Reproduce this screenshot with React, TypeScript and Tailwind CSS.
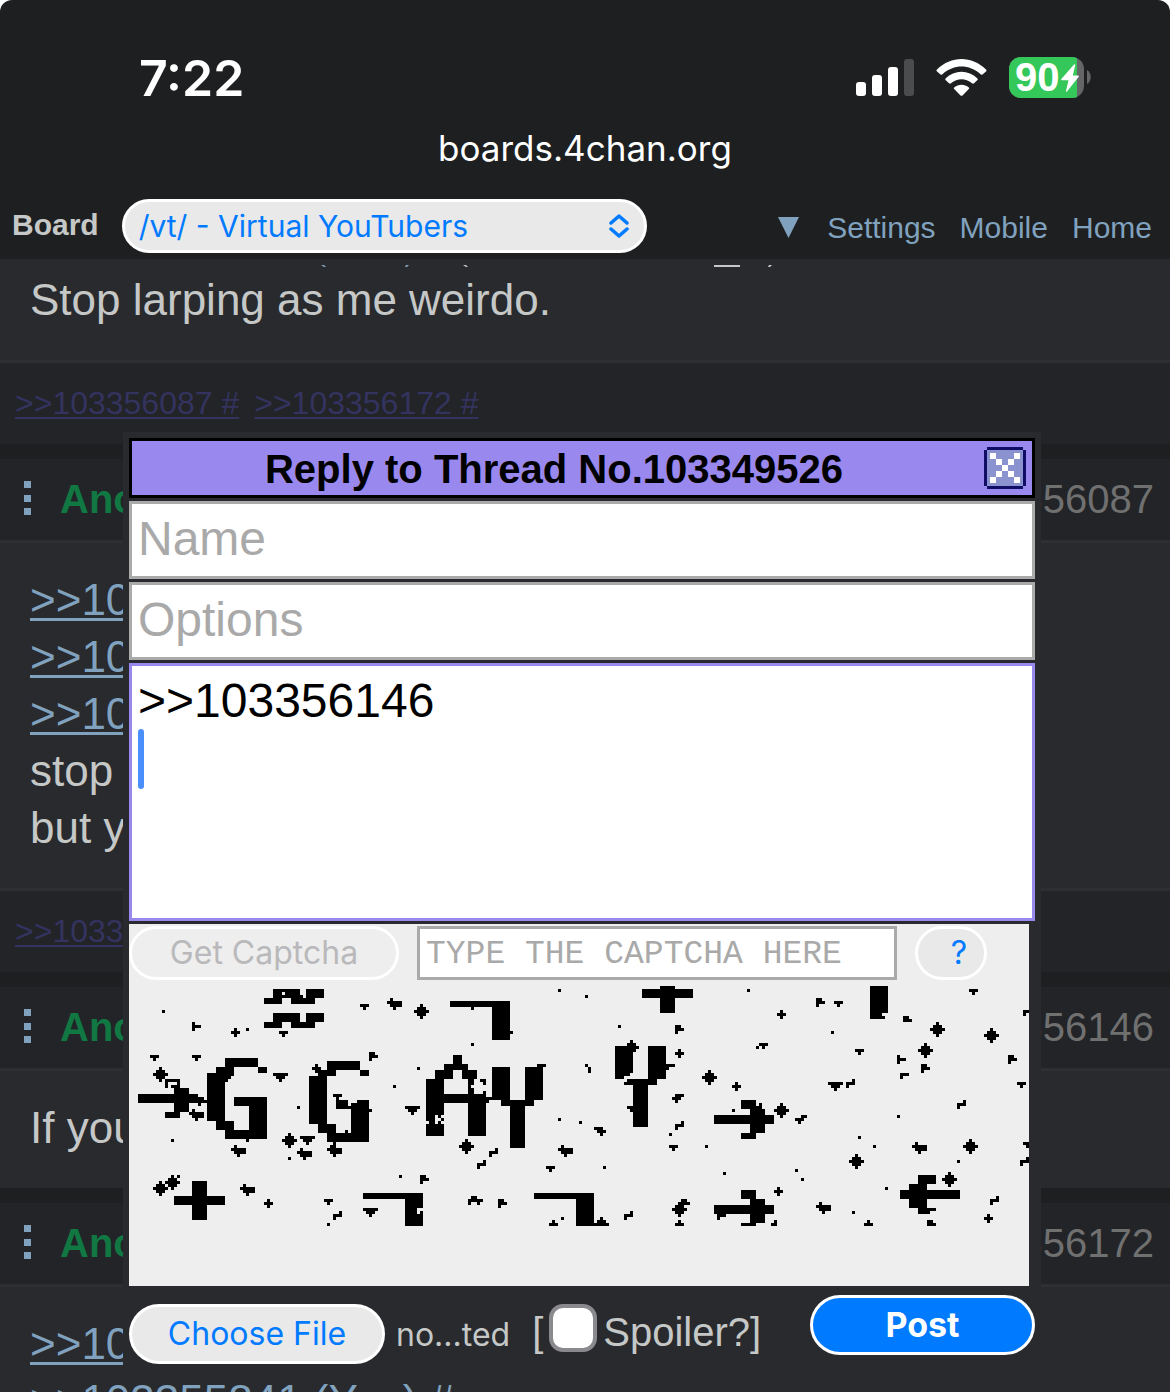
import React from "react";

type Rect = [number, number, number, number];
type Point = [number, number];

const STAMPS: Record<string, string[]> = {
  dot: ["#"],
  plus: [".#.", "###", ".#."],
  diamond: ["..#..", ".###.", "#####", ".###.", "..#.."],
  wedge: ["###", ".#."],
  bigWedge: ["#####", ".###.", "..#.."],
  spade: [".#...", "#####", ".####", "..#.."],
  flag: ["##.", "###", "#.."],
  tee: ["#..", "###", "#.."],
  zig: ["..#", "###", "#.."],
  corner: ["###", "#.."],
  bird: [".###", "###.", ".#.."],
  check: ["..##", "###.", ".#.."],
  crown: [".##..", "#####", "#..#."],
  peak: [".#.", "###"],
  bigPeak: ["..#..", ".###.", "#####"],
  step: ["##.", "###"],
  drop: ["###.", ".###", "..#."],
};

// Top-left cell of every stamp on the 300 x 80 captcha grid.
const NOISE: Record<string, Point[]> = {
  dot: [
    [11, 8], [39, 14], [56, 40], [88, 33], [14, 51], [53, 57], [16, 63], [90, 63], [66, 79], [96, 27],
    [143, 1], [152, 3], [163, 13], [114, 19], [143, 44], [150, 45], [180, 49], [158, 60], [144, 77],
    [206, 1], [234, 15], [209, 20], [201, 41], [192, 53], [198, 62], [256, 43], [243, 50], [248, 53],
    [276, 58], [222, 61], [224, 64], [252, 67], [241, 75], [152, 26], [62, 26],
  ],
  plus: [[34, 14], [45, 71], [182, 21], [216, 8], [201, 32], [215, 67], [285, 76], [61, 26]],
  diamond: [
    [8, 27], [51, 49], [8, 65], [12, 63], [95, 6], [110, 51], [165, 18], [181, 72], [267, 12], [285, 14],
    [263, 19], [191, 28], [215, 39], [240, 56], [278, 51], [271, 62],
  ],
  wedge: [
    [50, 15], [7, 23], [21, 23], [77, 6], [65, 71], [139, 60], [180, 53], [235, 5], [242, 21], [210, 19],
    [280, 1], [296, 32], [298, 52],
  ],
  bigWedge: [[48, 29], [92, 40], [78, 74], [57, 50], [233, 32]],
  spade: [[86, 4], [34, 53], [56, 54], [37, 66], [66, 53], [20, 41], [143, 53], [261, 52], [229, 72]],
  flag: [[80, 22], [182, 13], [97, 63], [123, 71], [184, 71], [229, 4], [264, 26], [293, 23]],
  tee: [[21, 12], [256, 23]],
  zig: [[68, 75], [120, 54], [116, 58], [182, 45], [165, 75], [239, 31], [276, 38], [287, 70], [297, 57]],
  corner: [[257, 29], [298, 8]],
  bird: [[181, 36]],
  check: [[222, 43]],
  crown: [[113, 70]],
  peak: [[140, 78], [182, 78], [245, 78]],
  bigPeak: [[155, 77]],
  step: [[258, 10], [266, 78]],
  drop: [[155, 47]],
};

const BLOCKS: Rect[] = [
  [48, 1, 9, 3], [45, 4, 6, 2], [54, 4, 8, 2], [59, 1, 6, 3], [57, 3, 1, 1],
  [48, 9, 9, 3], [45, 12, 6, 2], [54, 12, 8, 2], [59, 9, 6, 3],
  [32, 24, 11, 3], [29, 27, 6, 3], [32, 30, 2, 1], [32, 31, 1, 1], [26, 29, 6, 16], [43, 27, 3, 2],
  [35, 37, 11, 3], [40, 40, 6, 8], [29, 45, 6, 3], [32, 48, 14, 3], [39, 51, 1, 1],
  [66, 25, 11, 3], [63, 28, 6, 2], [60, 30, 6, 16], [77, 28, 3, 2], [69, 38, 4, 3], [73, 40, 1, 1],
  [76, 38, 4, 1], [74, 39, 6, 10], [63, 46, 6, 3], [66, 49, 14, 3], [68, 36, 3, 1], [69, 37, 1, 1],
  [72, 48, 1, 1], [80, 41, 1, 1], [68, 52, 1, 2],
  [3, 36, 20, 3], [15, 34, 5, 8], [12, 42, 5, 2], [12, 31, 5, 1], [12, 32, 1, 2], [16, 32, 1, 2],
  [14, 33, 2, 1], [23, 37, 2, 2], [23, 39, 1, 1], [25, 38, 1, 1],
  [15, 70, 17, 3], [21, 65, 5, 13],
  [78, 69, 20, 2], [92, 69, 6, 11],
  [107, 5, 20, 2], [121, 5, 6, 13], [114, 7, 1, 1], [127, 15, 1, 1],
  [171, 1, 17, 3], [177, 0, 5, 9],
  [108, 23, 3, 3], [105, 26, 8, 2], [102, 28, 6, 3], [111, 28, 5, 3], [99, 31, 6, 19], [113, 31, 2, 2],
  [113, 33, 1, 1], [113, 34, 2, 2], [105, 36, 8, 3], [113, 36, 6, 14], [117, 31, 2, 1], [118, 32, 1, 1],
  [118, 35, 1, 1], [119, 37, 2, 1], [119, 38, 1, 1],
  [121, 27, 6, 11], [132, 27, 6, 11], [136, 26, 3, 1], [124, 38, 11, 2], [127, 40, 5, 14],
  [162, 20, 6, 9], [162, 29, 5, 1], [162, 30, 3, 1], [173, 20, 6, 11], [166, 31, 10, 1], [165, 32, 11, 1],
  [168, 33, 5, 14], [179, 26, 3, 1], [179, 27, 1, 1], [166, 40, 2, 1], [167, 41, 1, 1], [153, 27, 1, 2],
  [135, 69, 20, 2], [149, 69, 6, 11],
  [247, 0, 6, 9], [247, 9, 4, 2], [251, 10, 1, 1],
  [195, 43, 20, 3], [204, 38, 5, 3], [207, 41, 5, 8], [204, 49, 5, 2], [210, 39, 1, 2], [209, 40, 2, 1],
  [195, 73, 20, 3], [204, 68, 5, 3], [207, 71, 5, 8], [204, 79, 5, 1], [196, 76, 3, 1], [196, 77, 1, 1],
  [215, 78, 1, 1], [214, 79, 2, 1],
  [257, 68, 20, 3], [260, 66, 6, 8], [263, 63, 6, 3], [263, 74, 6, 1], [263, 75, 4, 1],
];

const HOLES: Rect[] = [
  [51, 2, 1, 1], [96, 74, 2, 1], [96, 75, 1, 1], [102, 43, 1, 3], [103, 44, 1, 1], [104, 43, 1, 1],
  [99, 45, 1, 1], [104, 45, 1, 1], [116, 35, 1, 1],
];

function stampRects(rows: string[], [x, y]: Point): Rect[] {
  return rows.flatMap((row, dy) =>
    [...row].flatMap((c, dx) => (c === "#" ? [[x + dx, y + dy, 1, 1] as Rect] : []))
  );
}

function toPath(rects: Rect[]) {
  return rects.map(([x, y, w, h]) => `M${x} ${y}h${w}v${h}h-${w}z`).join("");
}

function CaptchaImage() {
  const noise = Object.entries(NOISE).flatMap(([name, points]) =>
    points.flatMap((p) => stampRects(STAMPS[name], p))
  );
  return (
    <svg viewBox="0 0 300 80" className="block w-full" shapeRendering="crispEdges" role="img" aria-label="Captcha challenge">
      <path d={toPath(noise)} />
      <path d={toPath(BLOCKS)} />
      <path d={toPath(HOLES)} fill="#eeeeee" />
    </svg>
  );
}

function CloseIcon() {
  return (
    <svg viewBox="0 0 14 14" className="block size-[42px]" shapeRendering="crispEdges" aria-hidden="true">
      <path d="M1 0h12v1h1v12h-1v1h-12v-1h-1v-12h1z" fill="#110d66" />
      <path d="M1 1h12v12h-12z" fill="#8a93cf" />
      <path
        d="M2 2h2v2h-2zM10 2h2v2h-2zM4 4h2v2h-2zM8 4h2v2h-2zM6 6h2v2h-2zM4 8h2v2h-2zM8 8h2v2h-2zM2 10h2v2h-2zM10 10h2v2h-2z"
        fill="#fff"
      />
    </svg>
  );
}

function StatusIcons() {
  return (
    <div className="flex items-center pb-0.5">
      <svg width="58" height="37" viewBox="0 0 58 37" fill="#fff" aria-label="Signal">
        <rect x="0" y="23" width="10" height="14" rx="3" />
        <rect x="16" y="16" width="10" height="21" rx="3" />
        <rect x="32" y="8" width="10" height="29" rx="3" />
        <rect x="48" y="0" width="10" height="37" rx="3" fill="#4b4c4e" />
      </svg>
      <svg width="51" height="37" viewBox="0 0 51 37" fill="#fff" className="ml-[22px]" aria-label="Wi-Fi">
        <path d="M1 10.500C15-3.500 36-3.500 50 10.500Q51 11.500 50 12.500L46.500 15.500Q45.500 16 44.500 15.200C33 5 18 5 6.500 15.200Q5.500 16 4.500 15.500L1 12.500Q0 11.500 1 10.500Z" />
        <path d="M9.500 19.500C18.500 10.500 32.500 10.500 41.500 19.500Q42 20.300 41.500 21L38 24.300Q37 25 36 24.200C29.500 18.800 21.500 18.800 15 24.200Q14 25 13 24.300L9.500 21Q9 20.300 9.500 19.500Z" />
        <path d="M18.200 28.500C22.500 24.700 28.500 24.700 32.800 28.500Q33.500 29.200 32.800 30L26.500 36.400Q25.500 37.200 24.500 36.400L18.200 30Q17.500 29.200 18.200 28.500Z" />
      </svg>
      <div className="relative ml-[22px] flex h-[41px] w-[75px] items-center overflow-hidden rounded-xl bg-[#656567]">
        <div className="absolute inset-y-0 left-0 w-[68px] bg-[#34c759]" />
        <span className="relative ml-1.5 font-['Liberation_Sans',sans-serif] text-[40px] leading-none font-bold">90</span>
        <svg viewBox="0 0 18 28" className="absolute top-[7px] left-[52px] h-7 w-[18px]" fill="#fff" aria-hidden="true">
          <path d="M13 0.500Q14.500-0.200 14.200 1.500L11.800 11.500H17Q18.500 11.800 17.500 13L6 27.500Q4.700 28.500 5 26.800L7.500 16.300H1Q-0.500 16 0.500 14.700Z" />
        </svg>
      </div>
      <svg width="5" height="14" viewBox="0 0 5 14" className="ml-0.5" aria-hidden="true">
        <path d="M1 0C6 3 6 11 1 14Z" fill="#656567" />
      </svg>
    </div>
  );
}

function BackLinks({ ids }: { ids: string[] }) {
  return (
    <div className="flex gap-[15px] border-t-3 border-[#2d2f33] bg-[#222427] px-[15px] py-5 text-[32px] leading-[41px] text-[#34335f]">
      {ids.map((id) => (
        <a key={id} href="#" className="underline decoration-2 underline-offset-3">
          {`>>${id} #`}
        </a>
      ))}
    </div>
  );
}

function PostHeader({ id }: { id: string }) {
  return (
    <div className="mt-[15px] flex h-[84px] items-center border-b-3 border-[#2d2f33] bg-[#222427] pr-4 pb-0.5 pl-6 text-[40px]">
      <button type="button" aria-label="Post menu" className="block">
        <svg width="7" height="35" viewBox="0 0 7 35" fill="#81a2be" shapeRendering="crispEdges">
          <path d="M0 0h7v7h-7zM0 14h7v7h-7zM0 27h7v7h-7z" />
        </svg>
      </button>
      <span className="ml-[29px] font-bold text-[#117743]">Anonymous</span>
      <span className="ml-auto text-[#707070]">No.{id}</span>
    </div>
  );
}

function PostBody({ children }: { children: React.ReactNode }) {
  return (
    <div className="flex flex-col items-start bg-[#282a2e] px-[30px] pt-7 pb-8 text-[44px] leading-[57px]">{children}</div>
  );
}

function Quote({ children }: { children: React.ReactNode }) {
  return (
    <a href="#" className="text-[#81a2be] underline decoration-3 underline-offset-3">
      {children}
    </a>
  );
}

const pill = "rounded-full border-3 border-white font-['Inter',sans-serif]";
const field = "h-[78px] w-full border-3 border-[#aaaaaa] bg-white px-1.5 pb-1 text-[48px] text-black placeholder:text-[#a9a9a9]";

function ReplyForm() {
  return (
    <form
      className="absolute top-[432px] right-[129px] left-[123px] flex flex-col gap-[3px] bg-[#282a2e] p-1.5"
      onSubmit={(e) => e.preventDefault()}
    >
      <div className="flex h-[60px] items-center border-3 border-black bg-[#9988ee] pr-1.5 text-[40px] font-bold text-black">
        <h2 className="flex-1 pt-0.5 pr-2 text-center">Reply to Thread No.103349526</h2>
        <button type="button" aria-label="Close">
          <CloseIcon />
        </button>
      </div>
      <input aria-label="Name" placeholder="Name" className={field} />
      <input aria-label="Options" placeholder="Options" className={field} />
      <div className="relative">
        <textarea
          aria-label="Comment"
          defaultValue={">>103356146\n"}
          className="block h-[258px] w-full resize-none border-3 border-[#9988ee] bg-white p-1.5 text-[48px] leading-[57px] text-black outline-none"
        />
        <div className="absolute top-[66px] left-[9px] h-[60px] w-1.5 rounded-full bg-[#4a8ffc]" />
      </div>
      <div className="mr-1.5 bg-[#eeeeee] pt-0.5 pb-[60px]">
        <div className="mb-1.5 flex h-[54px] gap-[18px]">
          <button type="button" disabled className={`${pill} w-[270px] bg-[#eeeeee] text-[32px] text-[#b9b9bb]`}>
            Get Captcha
          </button>
          <input
            aria-label="Captcha"
            placeholder="TYPE THE CAPTCHA HERE"
            className="w-[480px] border-3 border-[#aaaaaa] bg-white px-1.5 pt-1 font-['Liberation_Mono',monospace] text-[33px] text-black placeholder:text-[#a9a9a9]"
          />
          <button type="button" className={`${pill} w-[72px] bg-[#e9e9e9] pl-4 text-[32px] text-[#007aff]`}>
            ?
          </button>
        </div>
        <CaptchaImage />
      </div>
      <div className="mt-1.5 flex items-start text-[#c5c8c6]">
        <label
          htmlFor="upfile"
          className={`${pill} mt-[9px] flex h-[60px] w-64 items-center justify-center bg-[#e9e9e9] text-[32px] text-[#007aff]`}
        >
          Choose File
        </label>
        <input id="upfile" type="file" className="sr-only" />
        <span className="mt-[9px] ml-[11px] font-['Inter',sans-serif] text-[32px] leading-[62px]">no...ted</span>
        <div className="mt-[9px] ml-[22px] flex items-start text-[40px] leading-[56px]">
          <span>[</span>
          <input
            id="spoiler"
            type="checkbox"
            className="mx-1.5 size-12 appearance-none rounded-[14px] border-4 border-[#8a8a8e] bg-white"
          />
          <label htmlFor="spoiler">Spoiler?]</label>
        </div>
        <button
          type="submit"
          className={`${pill} ml-auto h-[60px] w-[225px] bg-[#007aff] text-[34px] leading-none font-bold text-white`}
        >
          Post
        </button>
      </div>
    </form>
  );
}

export default function App() {
  return (
    <div className="h-screen bg-white">
      <div className="relative h-full overflow-hidden rounded-t-xl bg-[#1d1f21] font-['Liberation_Sans',Arial,sans-serif] text-[#c5c8c6]">
        <header className="pb-1.5">
          <div className="flex items-center justify-between pt-12 pr-[79px] pl-[139px] font-['Inter',sans-serif] text-white">
            <span className="text-[50px] leading-[60px] font-semibold">7:22</span>
            <StatusIcons />
          </div>
          <div className="mt-4 text-center font-['Inter',sans-serif] text-[35px] leading-[48px] text-white">boards.4chan.org</div>
          <nav className="mt-[27px] flex h-[54px] items-center pr-[18px] pl-3 text-[30px]">
            <label htmlFor="board" className="pb-1 font-bold">
              Board
            </label>
            <div className="relative ml-[23px] h-full w-[525px]">
              <select
                id="board"
                className={`${pill} h-full w-full appearance-none bg-[#e9e9e9] px-3.5 text-[30px] text-[#007aff]`}
              >
                <option>/vt/ - Virtual YouTubers</option>
              </select>
              <svg
                width="20"
                height="24"
                viewBox="0 0 20 24"
                fill="none"
                stroke="#007aff"
                strokeWidth="3.500"
                strokeLinecap="round"
                strokeLinejoin="round"
                className="pointer-events-none absolute top-[15px] right-[18px]"
                aria-hidden="true"
              >
                <path d="M2 9l8-7 8 7M2 15l8 7 8-7" />
              </svg>
            </div>
            <div className="ml-auto flex items-center gap-6 pt-0.5 text-[#81a2be]">
              <button type="button" aria-label="More" className="mr-1">
                <svg width="21" height="21" viewBox="0 0 21 21" fill="#81a2be">
                  <path d="M0 0h21l-10.500 21z" />
                </svg>
              </button>
              <a href="#">Settings</a>
              <a href="#">Mobile</a>
              <a href="#">Home</a>
            </div>
          </nav>
        </header>

        <main>
          <div className="bg-[#282a2e] pt-1.5">
            <svg width="780" height="3" viewBox="0 0 780 3" className="block" aria-hidden="true">
              <path d="M321 0h3l2 2h-2zM406 0h3l-2 2h-2z" fill="#81a2be" />
              <path d="M463 0h3l2 2h-2zM714 0h26v2h-26zM769 0h3l-2 2h-2z" fill="#c5c8c6" />
            </svg>
            <div className="px-[30px] pt-[3px] pb-8 text-[44px] leading-[57px]">Stop larping as me weirdo.</div>
          </div>
          <BackLinks ids={["103356087", "103356172"]} />

          <PostHeader id="103356087" />
          <PostBody>
            <Quote>{">>103355841"}</Quote>
            <Quote>{">>103355841"}</Quote>
            <Quote>{">>103355841"}</Quote>
            <span>stop</span>
            <span>but you</span>
          </PostBody>
          <BackLinks ids={["103356146"]} />

          <PostHeader id="103356146" />
          <PostBody>
            <span>If you</span>
          </PostBody>

          <PostHeader id="103356172" />
          <PostBody>
            <Quote>{">>103356087"}</Quote>
            <Quote>{">>103355841 (You) #"}</Quote>
          </PostBody>
        </main>

        <ReplyForm />
      </div>
    </div>
  );
}
